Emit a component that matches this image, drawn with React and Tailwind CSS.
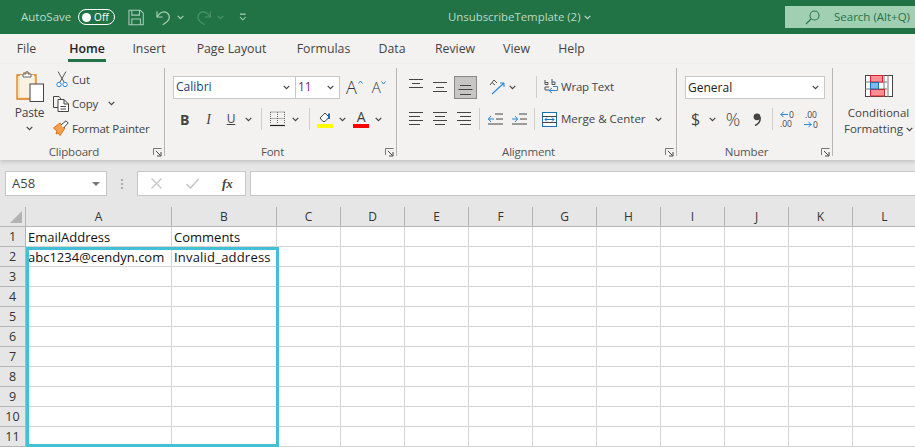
import React from "react";

const Chev = ({ className = "", color = "#444", w = 7 }) => (
  <svg width={w} height="5" viewBox="0 0 7 5" className={"shrink-0 " + className}>
    <path d="M0.7 0.8 L3.5 3.6 L6.3 0.8" fill="none" stroke={color} strokeWidth="1.2" />
  </svg>
);

const Lines = ({ rows, className = "" }) => (
  <svg width="16" height="16" viewBox="0 0 16 16" className={"shrink-0 " + className}>
    {rows.map(([x1, x2, y], i) => (
      <path key={i} d={`M${x1} ${y}.5H${x2}`} stroke="#444" strokeWidth="1" />
    ))}
  </svg>
);

const Launcher = () => (
  <svg width="9" height="9" viewBox="0 0 9 9" className="shrink-0">
    <path d="M0.5 7V0.5H8.5" fill="none" stroke="#777" />
    <path d="M3 3L7.5 7.5M8 4V8H4" fill="none" stroke="#444" />
  </svg>
);

const Divider = ({ className = "" }) => <div className={"w-px h-[22px] bg-[#d0cfce] shrink-0 " + className} />;

const GroupLabel = ({ children, className = "mt-[15px]" }) => (
  <div className={"flex items-center h-[14px] " + className}>
    <div className="flex-1 mr-[5px] text-center text-[11.5px] leading-[14px] text-[#555]">{children}</div>
    <div className="w-[11px] flex">
      <Launcher />
    </div>
  </div>
);

const GroupSep = () => <div className="w-px h-[88px] mt-[4px] bg-[#b8b7b6] shrink-0" />;

const Combo = ({ label, className = "", textClass = "text-[#222]" }) => (
  <div className={"h-[23px] bg-white border border-[#c8c8c8] flex items-center pl-[2px] pr-[5px] justify-between " + className}>
    <span className={"text-[12px] tracking-normal leading-none " + textClass}>{label}</span>
    <Chev />
  </div>
);

const ArrowLeft = () => (
  <svg width="8" height="7" viewBox="0 0 8 7" className="shrink-0">
    <path d="M0.5 3.5H8M3.5 0.8L1 3.5L3.5 6.2" stroke="#2b88d8" fill="none" />
  </svg>
);
const ArrowRight = () => (
  <svg width="8" height="7" viewBox="0 0 8 7" className="shrink-0">
    <path d="M0 3.5H7.5M4.5 0.8L7 3.5L4.5 6.2" stroke="#2b88d8" fill="none" />
  </svg>
);

const tabs = [
  ["File", "ml-[17px] w-[19px]"],
  ["Home", "ml-[32px] w-[38px]"],
  ["Insert", "ml-[27px] w-[32px]"],
  ["Page Layout", "ml-[31px] w-[71px]"],
  ["Formulas", "ml-[30px] w-[53px]"],
  ["Data", "ml-[29px] w-[26px]"],
  ["Review", "ml-[30px] w-[40px]"],
  ["View", "ml-[28px] w-[27px]"],
  ["Help", "ml-[28px] w-[27px]"],
];

const rows = Array.from({ length: 11 }, (_, i) => i + 1);
const cols = ["A", "B", "C", "D", "E", "F", "G", "H", "I", "J", "K", "L"];
const cells = {
  "1A": "EmailAddress",
  "1B": "Comments",
  "2A": "abc1234@cendyn.com",
  "2B": "Invalid_address",
};

export default function App() {
  return (
    <div className="relative w-[915px] h-[447px] overflow-hidden bg-white font-['Open_Sans','Noto_Sans',sans-serif] text-[12px]">
      {/* Title bar */}
      <div className="h-[34px] bg-[#217346] flex items-center text-[#bcd9c8]">
        <span className="ml-[21px] text-[11.5px] w-[50px]">AutoSave</span>
        <div className="ml-[7px] w-[38px] h-[16px] rounded-full border border-white flex items-center px-[3px] justify-between">
          <span className="w-[9px] h-[9px] rounded-full bg-white" />
          <span className="text-[10px] leading-none text-white mr-[2px]">Off</span>
        </div>
        <svg width="17" height="17" viewBox="0 0 17 17" className="ml-[13px]">
          <path d="M1 1H13L16 4V16H1Z M4 1V6H12V1 M4 16V10H13V16" fill="none" stroke="#a9cdb9" strokeWidth="1.1" />
        </svg>
        <svg width="16" height="17" viewBox="0 0 16 17" className="ml-[12px]">
          <path d="M1 2V8H7 M1 8C4 3 8 1 12 4C16 8 14 12 7 16" fill="none" stroke="#a9cdb9" strokeWidth="1.2" />
        </svg>
        <Chev color="#a9cdb9" className="ml-[6px]" />
        <svg width="16" height="17" viewBox="0 0 16 17" className="ml-[12px]">
          <path d="M15 2V8H9 M15 8C12 3 8 1 4 4C0 8 2 12 9 16" fill="none" stroke="#4f9170" strokeWidth="1.2" />
        </svg>
        <Chev color="#4f9170" className="ml-[6px]" />
        <svg width="8" height="8" viewBox="0 0 8 8" className="ml-[15px]">
          <path d="M1 1H7 M1 4L4 7L7 4" fill="none" stroke="#a9cdb9" strokeWidth="1.1" />
        </svg>
        <span className="ml-[201px] w-[130px] text-[11.4px] whitespace-nowrap">UnsubscribeTemplate (2)</span>
        <Chev color="#bcd9c8" w={9} className="ml-[5px]" />
        <div className="ml-[193px] w-[130px] h-[22px] bg-[#a0cfb2] flex items-center shrink-0">
          <svg width="15" height="15" viewBox="0 0 15 15" className="ml-[20px]">
            <circle cx="9.5" cy="5.5" r="4.5" fill="none" stroke="#2a7a50" strokeWidth="1.1" />
            <path d="M6 9L1 14" stroke="#2a7a50" strokeWidth="1.2" />
          </svg>
          <span className="ml-[14px] text-[11.5px] text-[#24754c] whitespace-nowrap">Search (Alt+Q)</span>
        </div>
      </div>

      {/* Tabs */}
      <div className="h-[30px] bg-[#f3f2f1] flex text-[12.3px] text-[#444]">
        {tabs.map(([t, m]) => (
          <div key={t} className={"relative h-full flex items-center justify-center pt-[1px] whitespace-nowrap shrink-0 " + m}>
            <span className={t === "Home" ? "text-[#222] font-semibold" : ""}>{t}</span>
            {t === "Home" && <div className="absolute left-0 right-0 top-[25px] h-[3px] bg-[#217346]" />}
          </div>
        ))}
      </div>

      {/* Ribbon */}
      <div className="h-[96px] bg-[#f3f2f1] flex text-[#444] text-[11.5px] tracking-[-0.2px] shadow-[0_2px_4px_rgba(0,0,0,0.16)] relative">
        {/* Clipboard */}
        <div className="w-[164px] flex flex-col shrink-0">
          <div className="flex h-[79px]">
            <div className="w-[59px] flex flex-col items-center shrink-0 pt-[7px]">
              <svg width="28" height="32" viewBox="0 0 28 32">
                <path d="M1 4H8V2H13V4H20V28H1Z" fill="#fbe4b8" stroke="#dd7d1c" strokeWidth="1.3" />
                <rect x="4" y="4" width="14" height="22" fill="#f9f2e2" />
                <path d="M7 6V3H10V0.8H12V3H15V6Z" fill="#fff" stroke="#666" />
                <rect x="14" y="13" width="13.5" height="17.5" fill="#fff" stroke="#444" />
              </svg>
              <span className="mt-[3px] text-[12px] leading-[14px]">Paste</span>
              <Chev className="mt-[6px]" />
            </div>
            <div className="flex flex-col pt-[3px]">
              <div className="h-[24.5px] shrink-0 flex items-center">
                <svg width="12" height="17" viewBox="0 0 12 17" className="-ml-[3px] mr-[4px]">
                  <path d="M2 0.5L8 11M10 0.5L4 11" stroke="#555" fill="none" />
                  <circle cx="3" cy="13.5" r="2.2" fill="#fff" stroke="#2b88d8" />
                  <circle cx="9" cy="13.5" r="2.2" fill="#fff" stroke="#2b88d8" />
                </svg>
                <span>Cut</span>
              </div>
              <div className="h-[24.5px] shrink-0 flex items-center">
                <svg width="16" height="16" viewBox="0 0 16 16" className="-ml-[6px] mr-[3px]">
                  <path d="M5 11.5H0.5V0.5H6L8 3" fill="none" stroke="#444" />
                  <path d="M5 3.5H11L15.5 8V15.5H5Z M11 3.5V8H15.5 M7.5 10.5H13 M7.5 13H13" fill="#fff" stroke="#444" />
                </svg>
                <span>Copy</span>
                <Chev className="ml-[10px]" />
              </div>
              <div className="h-[24.5px] shrink-0 flex items-center">
                <svg width="16" height="16" viewBox="0 0 16 16" className="-ml-[6px] mr-[3px]">
                  <path d="M0.5 8L7 3L12 8L7 15.5L5 13L3 14L4 11Z" fill="#f4a14b" stroke="#d9701a" />
                  <path d="M8 5L13 0.8L15.2 3L10.5 8" fill="#fff" stroke="#444" />
                </svg>
                <span className="whitespace-nowrap">Format Painter</span>
              </div>
            </div>
          </div>
          <GroupLabel className="mt-[2px]">Clipboard</GroupLabel>
        </div>
        <GroupSep />

        {/* Font */}
        <div className="w-[231px] flex flex-col shrink-0">
          <div className="flex items-center mt-[12px] h-[22px] pl-[8px]">
            <Combo label="Calibri" className="w-[123px]" textClass="text-[#1a3f78]" />
            <Combo label="11" className="w-[45px] -ml-px" textClass="text-[#70257e]" />
            <span className="ml-[6px] text-[18px] font-light text-[#333] leading-none">A</span>
            <svg width="5" height="4" viewBox="0 0 5 4" className="mb-[10px] ml-[1px]"><path d="M0.5 3.5L2.5 1L4.5 3.5" fill="none" stroke="#2b88d8" /></svg>
            <span className="ml-[9px] text-[15px] font-light text-[#333] leading-none">A</span>
            <svg width="5" height="4" viewBox="0 0 5 4" className="mb-[9px] ml-[1px]"><path d="M0.5 0.5L2.5 3L4.5 0.5" fill="none" stroke="#2b88d8" /></svg>
          </div>
          <div className="flex items-center mt-[10px] h-[22px]">
            <span className="ml-[15px] w-[9px] text-center font-bold text-[14px]">B</span>
            <span className="ml-[15px] w-[9px] text-center italic text-[14px] font-['Liberation_Serif',serif]">I</span>
            <span className="ml-[13px] w-[10px] text-center underline text-[12px]">U</span>
            <Chev className="ml-[9px]" />
            <Divider className="ml-[9px]" />
            <svg width="15" height="16" viewBox="0 0 15 16" className="ml-[8px]">
              <path d="M0.5 1H15M0.5 7.5H15M0.5 1V13M14.5 1V13M7.5 1V13" stroke="#666" strokeDasharray="1 1" fill="none" />
              <path d="M0 14.5H15" stroke="#222" strokeWidth="1.2" />
            </svg>
            <Chev className="ml-[7px]" />
            <Divider className="ml-[10px]" />
            <div className="ml-[7px] w-[16px] flex flex-col items-center">
              <svg width="14" height="13" viewBox="0 0 14 13">
                <path d="M2 7L7 2L11 6L7 10.5H5Z" fill="#fff" stroke="#444" />
                <path d="M11 2.5V8" stroke="#1e6fba" strokeWidth="2" />
              </svg>
              <div className="w-[16px] h-[4px] bg-[#ffff00]" />
            </div>
            <Chev className="ml-[6px]" />
            <div className="ml-[7px] w-[16px] flex flex-col items-center">
              <span className="text-[14px] leading-[13px]">A</span>
              <div className="w-[16px] h-[4px] mt-[1px] bg-[#f00]" />
            </div>
            <Chev className="ml-[6px]" />
          </div>
          <GroupLabel>Font</GroupLabel>
        </div>
        <GroupSep />

        {/* Alignment */}
        <div className="w-[279px] flex flex-col shrink-0">
          <div className="flex items-center mt-[12px] h-[22px]">
            <Lines className="ml-[12px]" rows={[[0, 14, 0], [3, 11, 4], [0, 14, 8]]} />
            <Lines className="ml-[8px]" rows={[[0, 14, 3], [3, 11, 8], [0, 14, 12]]} />
            <div className="ml-[5px] w-[23px] h-[23px] bg-[#c8c6c4] border border-[#8a8886] flex items-center justify-center">
              <svg width="15" height="16" viewBox="0 0 15 16"><path d="M2 6.5H13M0.5 10.5H14.5M2 15.5H13" stroke="#444" /></svg>
            </div>
            <svg width="16" height="16" viewBox="0 0 16 16" className="ml-[12px]">
              <path d="M3 15L15 4M15 4H11M15 4V8" stroke="#2b88d8" fill="none" strokeWidth="1.1" />
              <path d="M1 6L5 1L8 4M3 3.5L6 6" stroke="#555" fill="none" />
            </svg>
            <Chev className="ml-[4px]" />
            <Divider className="ml-[20px]" />
            <svg width="15" height="16" viewBox="0 0 15 16" className="ml-[7px]">
              <path d="M1 5.5V1M1 3.5H4V5.5H1M8 5.5H11V3H8 M8 0V5.5 M5 11H1V8H5" fill="none" stroke="#555" />
              <path d="M9 7.5H13.5V11.5H5M8 9L5 11.5L8 14" fill="none" stroke="#2b88d8" />
            </svg>
            <span className="ml-[2px] whitespace-nowrap">Wrap Text</span>
          </div>
          <div className="flex items-center mt-[10px] h-[22px]">
            <Lines className="ml-[12px]" rows={[[0, 14, 1], [0, 11, 5], [0, 14, 9], [0, 11, 13]]} />
            <Lines className="ml-[8px]" rows={[[0, 14, 1], [2, 12, 5], [0, 14, 9], [2, 12, 13]]} />
            <Lines className="ml-[8px]" rows={[[0, 14, 1], [3, 14, 5], [0, 14, 9], [3, 14, 13]]} />
            <Divider className="ml-[6px]" />
            <svg width="15" height="12" viewBox="0 0 15 12" className="ml-[8px]">
              <path d="M7 1H15M8 6H15M0 11H15" stroke="#444" fill="none" />
              <path d="M0 6H6M3 3L0.5 6L3 9" stroke="#2b88d8" fill="none" />
            </svg>
            <svg width="15" height="12" viewBox="0 0 15 12" className="ml-[9px]">
              <path d="M7 1H15M8 6H15M0 11H15" stroke="#444" fill="none" />
              <path d="M0 6H6M3 3L5.5 6L3 9" stroke="#2b88d8" fill="none" />
            </svg>
            <Divider className="ml-[7px]" />
            <svg width="15" height="15" viewBox="0 0 15 15" className="ml-[7px]">
              <rect x="0.5" y="0.5" width="14" height="14" fill="#fff" stroke="#1e6fba" />
              <path d="M0 4.5H15M0 10.5H15" stroke="#444" />
              <path d="M3 7.5H12M5 5.5L3 7.5L5 9.5M10 5.5L12 7.5L10 9.5" stroke="#1e6fba" fill="none" />
            </svg>
            <span className="ml-[4px] whitespace-nowrap tracking-normal">Merge &amp; Center</span>
            <Chev className="ml-[9px]" />
          </div>
          <GroupLabel>Alignment</GroupLabel>
        </div>
        <GroupSep />

        {/* Number */}
        <div className="w-[155px] flex flex-col shrink-0">
          <div className="flex mt-[12px] h-[22px] pl-[8px]">
            <Combo label="General" className="w-[140px]" />
          </div>
          <div className="flex items-center mt-[10px] h-[22px]">
            <span className="ml-[13px] w-[11px] text-center text-[16px] leading-none">$</span>
            <Chev className="ml-[8px]" />
            <span className="ml-[8px] w-[18px] text-center text-[18px] font-light leading-none">%</span>
            <svg width="9" height="13" viewBox="0 0 9 13" className="ml-[11px]">
              <circle cx="4" cy="3.8" r="3.4" fill="#444" />
              <path d="M7 4C7.6 8 5.5 11 2 12.5" fill="none" stroke="#444" strokeWidth="1.6" />
            </svg>
            <Divider className="ml-[10px]" />
            <div className="ml-[7px] w-[16px] flex flex-col text-[8.5px] leading-[9px] tracking-normal">
              <div className="flex items-center gap-[1px] h-[8px]"><ArrowLeft /><span>0</span></div>
              <span className="mt-[1px]">.00</span>
            </div>
            <div className="ml-[8px] w-[16px] flex flex-col text-[8.5px] leading-[9px] tracking-normal">
              <span className="pl-[1px]">.00</span>
              <div className="flex items-center gap-[1px] h-[8px] mt-[1px]"><ArrowRight /><span>0</span></div>
            </div>
          </div>
          <GroupLabel>Number</GroupLabel>
        </div>
        <GroupSep />

        {/* Conditional */}
        <div className="flex-1 flex flex-col items-center pt-[11px] pl-[9px]">
          <svg width="28" height="22" viewBox="0 0 28 22">
            <rect x="0.5" y="0.5" width="27" height="21" fill="#fff" stroke="#444" />
            <path d="M5.5 0V22M9 7H22M9 14H22M0 7H5M0 14H5M23 0V22M19 0V22" stroke="#777" />
            <rect x="5.5" y="0.5" width="12" height="6.5" fill="#ff8f94" stroke="#d0242c" />
            <rect x="5.5" y="14.5" width="14" height="6.5" fill="#ff8f94" stroke="#d0242c" />
            <rect x="5.5" y="7.5" width="8" height="6.5" fill="#7fbcec" stroke="#1e6fba" />
          </svg>
          <span className="mt-[8px] tracking-normal leading-[16px] whitespace-nowrap">Conditional</span>
          <span className="tracking-normal leading-[16px] whitespace-nowrap flex items-center">
            Formatting<Chev className="ml-[3px]" />
          </span>
        </div>
      </div>

      {/* Formula bar */}
      <div className="h-[47px] bg-[#e6e6e6] flex pt-[11px] text-[#444]">
        <div className="ml-[5px] w-[102px] h-[25px] bg-white border border-[#c6c6c6] flex items-center justify-between pl-[6px] pr-[6px]">
          <span className="text-[13px]">A58</span>
          <svg width="8" height="4" viewBox="0 0 8 4"><path d="M0 0H8L4 4Z" fill="#777" /></svg>
        </div>
        <div className="ml-[14px] w-[2px] h-[10px] mt-[8px] border-l-2 border-dotted border-[#aaa]" />
        <div className="ml-[14px] w-[109px] h-[25px] bg-white border border-[#c6c6c6] flex items-center">
          <svg width="11" height="11" viewBox="0 0 11 11" className="ml-[13px]"><path d="M0.5 0.5L10.5 10.5M10.5 0.5L0.5 10.5" stroke="#c8c8c8" strokeWidth="1.4" /></svg>
          <svg width="13" height="11" viewBox="0 0 13 11" className="ml-[24px]"><path d="M0.5 6L4.5 10L12.5 1" fill="none" stroke="#c8c8c8" strokeWidth="1.6" /></svg>
          <span className="ml-[23px] italic text-[13px] font-semibold font-['Liberation_Serif',serif]">fx</span>
        </div>
        <div className="ml-[4px] flex-1 h-[25px] bg-white border border-[#c6c6c6] border-r-0" />
      </div>

      {/* Sheet */}
      <div className="relative grid grid-cols-[26px_146px_105px_repeat(10,64px)] auto-rows-[20px] text-[13px] text-[#111]">
        <div className="bg-[#e6e6e6] border-r border-b border-[#b5b5b5] flex items-end justify-end pr-[3px] pb-[3px]">
          <svg width="12" height="12" viewBox="0 0 12 12"><path d="M12 0V12H0Z" fill="#b3b3b3" /></svg>
        </div>
        {cols.map((c) => (
          <div key={c} className="bg-[#e6e6e6] border-r border-b border-[#b5b5b5] flex items-center justify-center text-[#333] text-[12px]">
            {c}
          </div>
        ))}
        {rows.map((r) => (
          <React.Fragment key={r}>
            <div className="bg-[#e6e6e6] border-r border-b border-[#b5b5b5] flex items-center justify-center pt-[1px] text-[#333] text-[12.5px]">
              {r}
            </div>
            {cols.map((c) => (
              <div key={c} className="border-r border-b border-[#d4d4d4] flex items-center pl-[2px] pt-[3px] whitespace-nowrap overflow-visible">
                <span className={r === 2 && c === "B" ? "tracking-[0.2px]" : ""}>{cells[r + c]}</span>
              </div>
            ))}
          </React.Fragment>
        ))}
        <div className="absolute left-[26px] top-[40px] w-[253px] h-[200px] border-[3px] border-[#42c0d6] pointer-events-none" />
      </div>
    </div>
  );
}
